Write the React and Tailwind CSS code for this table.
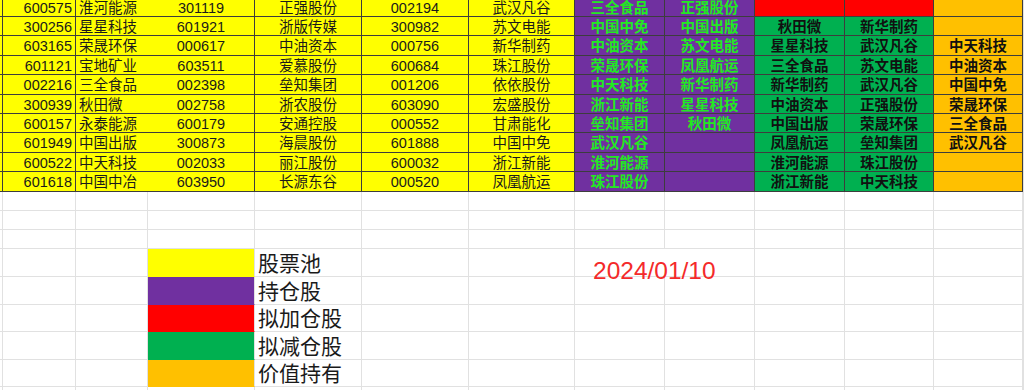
const COLS =
  "grid grid-cols-[3px_73px_72px_107px_107px_107px_106px_90px_90px_90px_89px_89px_1fr]";

const rows = [
  ["600575", "淮河能源", "301119", "正强股份", "002194", "武汉凡谷", "三全食品", "正强股份", "", "", ""],
  ["300256", "星星科技", "601921", "浙版传媒", "300982", "苏文电能", "中国中免", "中国出版", "秋田微", "新华制药", ""],
  ["603165", "荣晟环保", "000617", "中油资本", "000756", "新华制药", "中油资本", "苏文电能", "星星科技", "武汉凡谷", "中天科技"],
  ["601121", "宝地矿业", "603511", "爱慕股份", "600684", "珠江股份", "荣晟环保", "凤凰航运", "三全食品", "苏文电能", "中油资本"],
  ["002216", "三全食品", "002398", "垒知集团", "001206", "依依股份", "中天科技", "新华制药", "新华制药", "武汉凡谷", "中国中免"],
  ["300939", "秋田微", "002758", "浙农股份", "603090", "宏盛股份", "浙江新能", "星星科技", "中油资本", "正强股份", "荣晟环保"],
  ["600157", "永泰能源", "600179", "安通控股", "000552", "甘肃能化", "垒知集团", "秋田微", "中国出版", "荣晟环保", "三全食品"],
  ["601949", "中国出版", "300873", "海晨股份", "601888", "中国中免", "武汉凡谷", "", "凤凰航运", "垒知集团", "武汉凡谷"],
  ["600522", "中天科技", "002033", "丽江股份", "600032", "浙江新能", "淮河能源", "", "淮河能源", "珠江股份", ""],
  ["601618", "中国中冶", "603950", "长源东谷", "000520", "凤凰航运", "珠江股份", "", "浙江新能", "中天科技", ""],
];

const legend = [
  ["bg-[#ffff00]", "股票池"],
  ["bg-[#7030a0]", "持仓股"],
  ["bg-[#ff0000]", "拟加仓股"],
  ["bg-[#00b050]", "拟减仓股"],
  ["bg-[#ffc000]", "价值持有"],
];

const dark = "border-r border-b border-[#3d3d3d]";
const light = "border-r border-b border-[#e1e1e1]";
const cell = "flex items-center pt-[2px]";

function DataRow({ r, first }) {
  const green = first ? "bg-[#ff0000]" : "bg-[#00b050]";
  return (
    <div className={`${COLS} h-[19.4px] text-[14.5px] leading-none`}>
      <div className={`${dark} bg-[#ffff00]`} />
      <div className={`${dark} ${cell} bg-[#ffff00] justify-end pr-[3px] text-[#1a1a1a]`}>{r[0]}</div>
      <div className={`border-b border-[#3d3d3d] ${cell} bg-[#ffff00] pl-[3px] text-[#1a1a1a]`}>{r[1]}</div>
      {r.slice(2, 6).map((t, i) => (
        <div key={i} className={`${dark} ${cell} bg-[#ffff00] justify-center text-[#1a1a1a]`}>{t}</div>
      ))}
      {r.slice(6, 8).map((t, i) => (
        <div key={i} className={`${dark} ${cell} bg-[#7030a0] justify-center font-semibold text-[#22ea22]`}>{t}</div>
      ))}
      {r.slice(8, 10).map((t, i) => (
        <div key={i} className={`${dark} ${cell} ${green} justify-center font-semibold text-[#111]`}>{t}</div>
      ))}
      <div className={`${dark} ${cell} bg-[#ffc000] justify-center font-semibold text-[#111]`}>{r[10]}</div>
      <div className={light} />
    </div>
  );
}

function EmptyRow() {
  return (
    <div className={`${COLS} h-[19.3px]`}>
      {Array.from({ length: 13 }).map((_, i) => (
        <div key={i} className={light} />
      ))}
    </div>
  );
}

function LegendRow({ color, label, date }) {
  return (
    <div className={`${COLS} h-[27.6px]`}>
      <div className={light} />
      <div className={light} />
      <div className={light} />
      <div className={`border-r border-b border-[#e1e1e1] border-b-transparent ${color}`} />
      <div className={`${light} flex items-end pl-[3px] pb-[1px] text-[21px] leading-[22px] text-[#1a1a1a] whitespace-nowrap`}>
        {label}
      </div>
      <div className={light} />
      <div className={light} />
      <div className={`${light} ${date ? "border-r-transparent" : ""} flex items-end whitespace-nowrap`}>
        {date ? (
          <span className="relative top-[7px] pl-[18px] text-[24.5px] leading-none text-[#f42a2a] font-['Liberation_Sans',sans-serif]">
            2024/01/10
          </span>
        ) : null}
      </div>
      {Array.from({ length: 5 }).map((_, i) => (
        <div key={i} className={light} />
      ))}
    </div>
  );
}

export default function App() {
  return (
    <div className="w-[1024px] h-[390px] overflow-hidden bg-white font-['Liberation_Sans','Noto_Sans_CJK_SC',sans-serif]">
      <div className="mt-[-2.4px]">
        {rows.map((r, i) => (
          <DataRow key={i} r={r} first={i === 0} />
        ))}
        <EmptyRow />
        <EmptyRow />
        <EmptyRow />
        {legend.map(([c, l], i) => (
          <LegendRow key={i} color={c} label={l} date={i === 0} />
        ))}
        <EmptyRow />
      </div>
    </div>
  );
}
